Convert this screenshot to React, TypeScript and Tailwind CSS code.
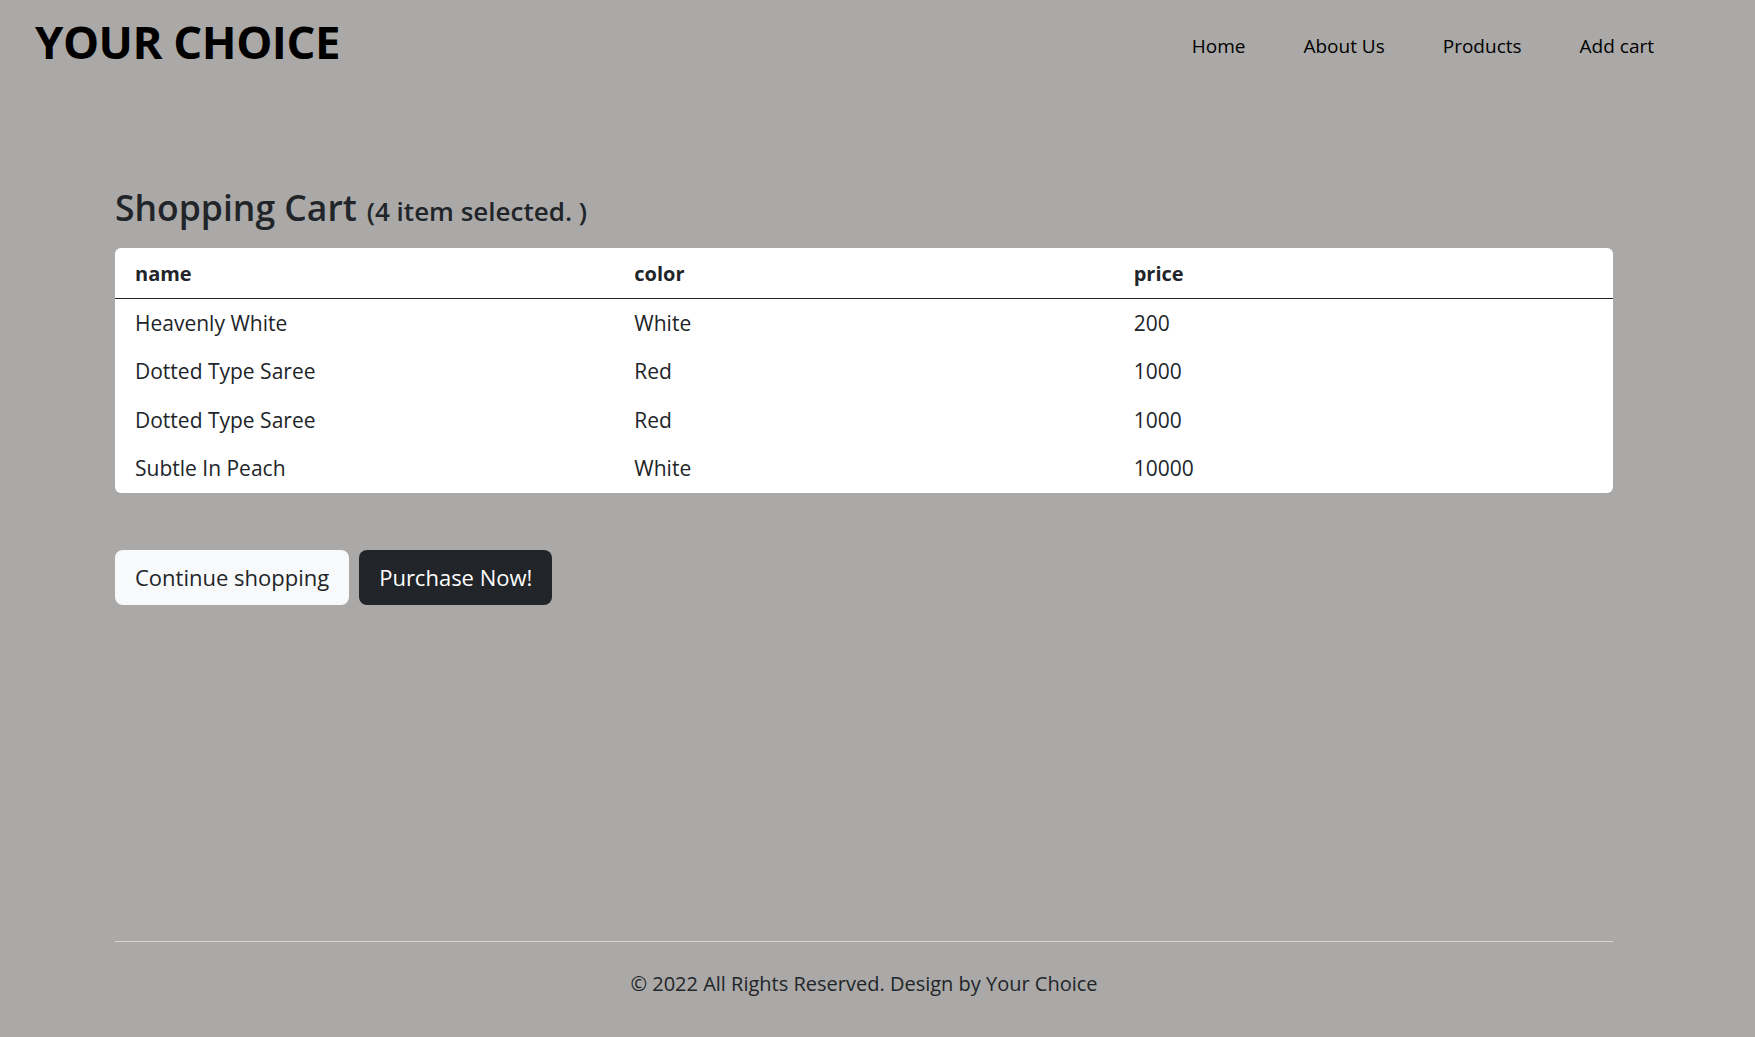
import React from "react";

const rows = [
  { name: "Heavenly White", color: "White", price: "200" },
  { name: "Dotted Type Saree", color: "Red", price: "1000" },
  { name: "Dotted Type Saree", color: "Red", price: "1000" },
  { name: "Subtle In Peach", color: "White", price: "10000" },
];

export default function App() {
  return (
    <div
      className="min-h-[1037px] bg-[#aaa9a7] text-[#212529] flex flex-col"
      style={{ fontFamily: '"Segoe UI", "Open Sans", "Noto Sans", sans-serif' }}
    >
      <header className="flex justify-between items-start pl-[35px] pr-[101px] h-[90px]">
        <div className="pt-[13px] text-[45.5px] leading-[56px] font-bold text-black tracking-[-0.5px]">
          YOUR CHOICE
        </div>
        <nav className="pt-[31px] flex gap-[58px] text-[19px] leading-[30px] font-medium text-black">
          <a>Home</a>
          <a>About Us</a>
          <a>Products</a>
          <a>Add cart</a>
        </nav>
      </header>

      <main className="pl-[115px] pr-[142px] flex-1 flex flex-col">
        <h2 className="mt-[95px] flex items-baseline gap-[10px] text-[35.5px] leading-[44px] font-semibold">
          <span>Shopping Cart</span>
          <span className="text-[26px]">(4 item selected. )</span>
        </h2>

        <div className="mt-[15px] bg-white rounded-[6px] overflow-hidden">
          <div className="grid grid-cols-3 h-[51px] pt-[1px] items-center border-b-[1.5px] border-[#212529] text-[20px] font-bold">
            <div className="pl-5">name</div>
            <div className="pl-5">color</div>
            <div className="pl-5">price</div>
          </div>
          {rows.map((r, i) => (
            <div key={i} className="grid grid-cols-3 h-[48.5px] items-center text-[21px]">
              <div className="pl-5">{r.name}</div>
              <div className="pl-5">{r.color}</div>
              <div className="pl-5">{r.price}</div>
            </div>
          ))}
        </div>

        <div className="mt-[57px] flex gap-[10px]">
          <button className="h-[55px] px-5 rounded-[8px] bg-[#f8f9fa] text-[22px] text-[#212529]">
            Continue shopping
          </button>
          <button className="h-[55px] px-5 rounded-[8px] bg-[#212529] text-[22px] text-white">
            Purchase Now!
          </button>
        </div>

        <footer className="mt-auto pb-[38px]">
          <div className="border-t border-[#d4d4d4]" />
          <p className="pt-[27px] text-center text-[20px] leading-[30px]">
            © 2022 All Rights Reserved. Design by Your Choice
          </p>
        </footer>
      </main>
    </div>
  );
}
